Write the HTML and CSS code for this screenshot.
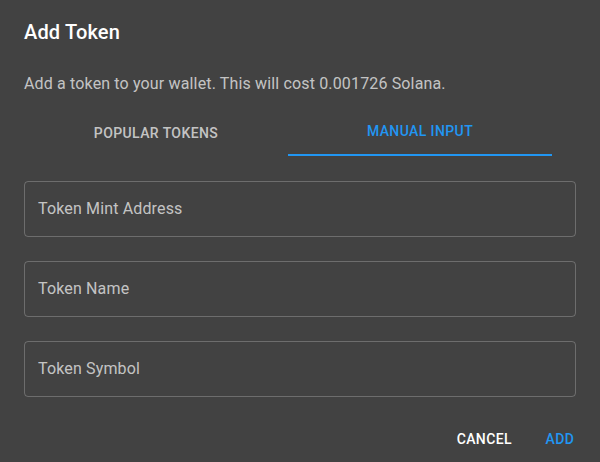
FILE: index.html
```html
<!DOCTYPE html>
<html>
<head>
<meta charset="utf-8">
<link rel="stylesheet" href="styles.css">
</head>
<body>
<div class="dialog">
  <h2 class="title">Add Token</h2>
  <div class="content">
    <p class="desc">Add a token to your wallet. This will cost 0.001726 Solana.</p>
    <div class="tabs">
      <div class="tab">Popular Tokens</div>
      <div class="tab active">Manual Input</div>
    </div>
    <div class="field"><span class="label">Token Mint Address</span></div>
    <div class="field"><span class="label">Token Name</span></div>
    <div class="field"><span class="label">Token Symbol</span></div>
  </div>
  <div class="actions">
    <button class="btn">Cancel</button>
    <button class="btn primary">Add</button>
  </div>
</div>
</body>
</html>
```
FILE: styles.css
```css
* { box-sizing: border-box; }
html, body {
  margin: 0;
  padding: 0;
  background: #424242;
  font-family: Roboto, "Liberation Sans", sans-serif;
  overflow: hidden;
}
.dialog {
  width: 600px;
  height: 462px;
  background: #424242;
  color: #fff;
  display: flex;
  flex-direction: column;
}
.title {
  margin: 0;
  padding: 16px 24px;
  font-size: 20px;
  font-weight: 500;
  line-height: 32px;
  letter-spacing: 0.0075em;
}
.content {
  padding: 8px 24px;
}
.desc {
  margin: 0 0 12px;
  font-size: 16px;
  line-height: 24px;
  color: rgba(255,255,255,0.7);
  letter-spacing: 0.00938em;
}
.tabs {
  display: flex;
  width: 528px;
  height: 48px;
  margin-bottom: 25px;
}
.tab {
  flex: 1;
  display: flex;
  align-items: center;
  justify-content: center;
  font-size: 14px;
  font-weight: 500;
  letter-spacing: 0.02857em;
  text-transform: uppercase;
  color: rgba(255,255,255,0.7);
  padding-top: 2px;
}
.tab.active {
  color: #2196f3;
  border-bottom: 2px solid #2196f3;
  padding-top: 0;
}
.field {
  height: 56px;
  border: 1px solid rgba(255,255,255,0.23);
  border-radius: 4px;
  display: flex;
  align-items: center;
  padding: 0 13px 2px 13px;
  margin-bottom: 24px;
}
.field:last-child { margin-bottom: 0; }
.label {
  font-size: 16px;
  color: rgba(255,255,255,0.7);
  letter-spacing: 0.00938em;
}
.actions {
  display: flex;
  justify-content: flex-end;
  gap: 8px;
  padding: 16px 8px 8px;
}
.btn {
  background: none;
  border: 0;
  font-family: inherit;
  font-size: 14px;
  font-weight: 500;
  letter-spacing: 0.02857em;
  text-transform: uppercase;
  color: #fff;
  padding: 6px 8px;
  min-width: 64px;
  line-height: 24px;
  height: 36px;
}
.btn.primary { color: #2196f3; }
```
